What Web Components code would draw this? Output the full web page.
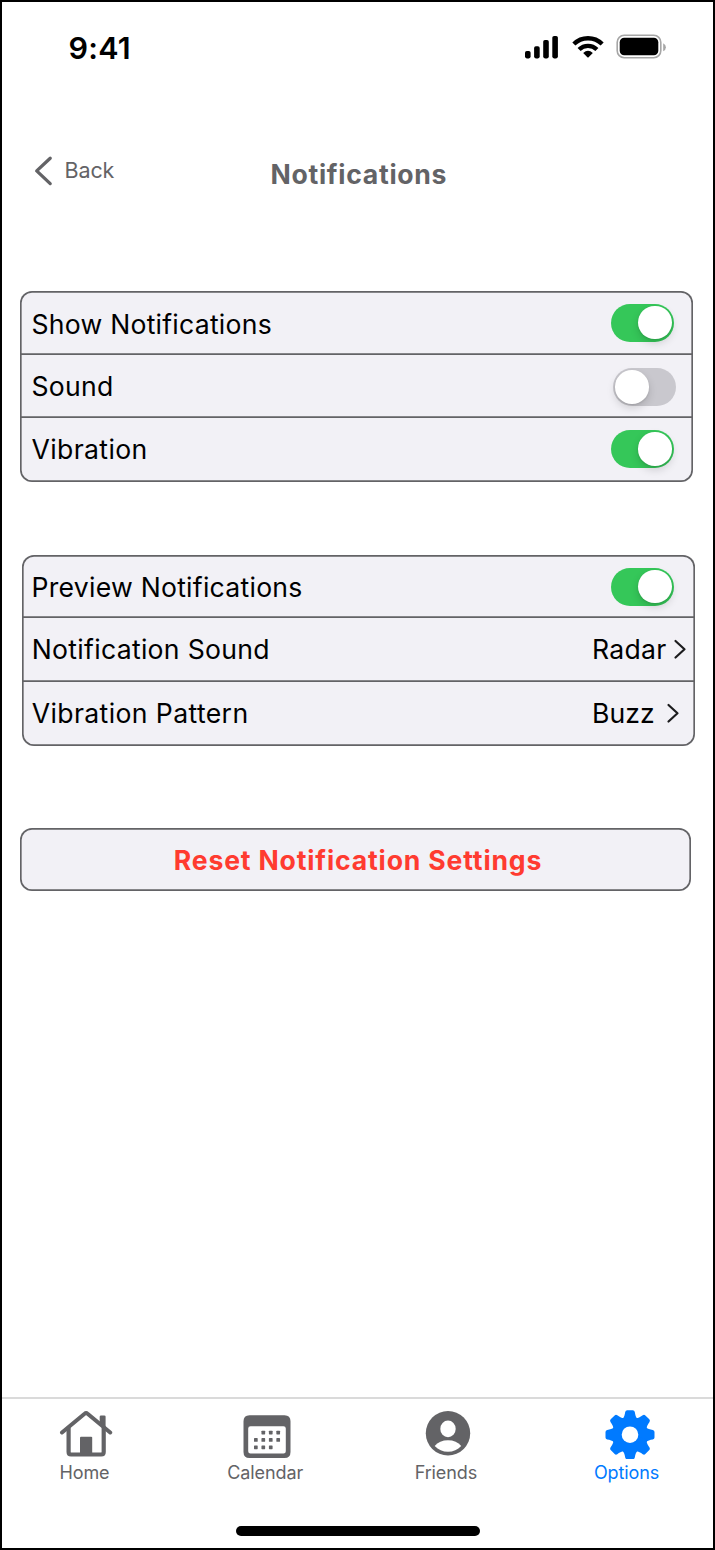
<!DOCTYPE html>
<html lang="en">
<head>
<meta charset="utf-8">
<title>Notifications</title>
<style>
html,body{margin:0;padding:0;background:#fff}
body{font-family:Inter,"Liberation Sans",sans-serif;color:#000}
</style>
</head>
<body>
<app-screen>
  <status-bar slot="status">9:41</status-bar>
  <nav-header slot="header" heading="Notifications">Back</nav-header>
  <settings-card style="margin:0 0 0 18px">
    <settings-row style="--h:64px;--end:19.500px;--ls:.24px;--pad:2px 0;--ty:-2px">Show Notifications<toggle-switch slot="end" on></toggle-switch></settings-row>
    <settings-row style="--h:63px;--end:17.500px;--ls:.24px;--ty:2px">Sound<toggle-switch slot="end"></toggle-switch></settings-row>
    <settings-row style="--h:64px;--end:19.500px;--line:0px;--ls:.36px;--pb:2px">Vibration<toggle-switch slot="end" on></toggle-switch></settings-row>
  </settings-card>
  <settings-card style="margin:73px 0 0 20px">
    <settings-row style="--h:63px;--start:9.500px;--end:21.500px;--ls:.25px;--pad:2px;--ty:-1px">Preview Notifications<toggle-switch slot="end" on></toggle-switch></settings-row>
    <settings-row style="--h:64px;--start:9.700px;--end:8px;--ls:.3px;--pb:2px">Notification Sound<row-value slot="end" style="width:95px">Radar</row-value></settings-row>
    <settings-row style="--h:64px;--start:9.700px;--end:15.500px;--line:0px;--ls:.38px;--pb:2px">Vibration Pattern<row-value slot="end" style="width:87.500px;letter-spacing:.1px">Buzz</row-value></settings-row>
  </settings-card>
  <danger-button style="margin:82px 0 0 18px">Reset Notification Settings</danger-button>
  <tab-bar slot="tabs">
    <tab-item icon="home">Home</tab-item>
    <tab-item icon="calendar">Calendar</tab-item>
    <tab-item icon="friends">Friends</tab-item>
    <tab-item icon="options" active>Options</tab-item>
  </tab-bar>
</app-screen>
<script>
const define = (name, html) => {
  const t = document.createElement('template');
  t.innerHTML = html;
  customElements.define(name, class extends HTMLElement {
    constructor() {
      super();
      this.attachShadow({mode: 'open'}).append(t.content.cloneNode(true));
    }
    connectedCallback() {
      const h = this.shadowRoot.querySelector('[data-heading]');
      if (h) h.textContent = this.getAttribute('heading');
      const i = this.shadowRoot.querySelector('[data-icon]');
      if (i) i.innerHTML = ICONS[this.getAttribute('icon')];
    }
  });
};

const tooth = a => `<path transform="rotate(${a})" d="M-8 -15.5C-5.6 -17.6 -5.3 -20 -4.8 -22.8Q-4.4 -24.5 -2.8 -24.5H2.8Q4.4 -24.5 4.8 -22.8C5.3 -20 5.6 -17.6 8 -15.5L5 -8H-5Z"/>`;
const ICONS = {
  home: `<svg width="54" height="50" viewBox="59 1408.500 54 50" style="margin-left:3px"><path d="M99.700 1425V1416.200Q99.700 1415 101 1415H104.300Q105.600 1415 105.600 1416.200V1428Z" fill="currentColor"/><path d="M62 1432L84.600 1413.300Q86.100 1412 87.600 1413.300L110.200 1432" fill="none" stroke="currentColor" stroke-width="4" stroke-linecap="round"/><path d="M68.600 1427V1451.600Q68.600 1454 71 1454H101.300Q103.700 1454 103.700 1451.600V1427" fill="none" stroke="currentColor" stroke-width="4.200"/><rect x="80" y="1436.200" width="12.200" height="19" rx="1" fill="currentColor"/></svg>`,
  calendar: `<svg width="54" height="50" viewBox="240.500 1409 54 50" style="margin-left:4px"><path fill-rule="evenodd" fill="currentColor" d="M250 1415.200H285Q291 1415.200 291 1421.200V1452Q291 1458 285 1458H250Q244 1458 244 1452V1421.200Q244 1415.200 250 1415.200ZM251 1426.200Q248.700 1426.200 248.700 1428.500V1451.200Q248.700 1453.500 251 1453.500H284Q286.300 1453.500 286.300 1451.200V1428.500Q286.300 1426.200 284 1426.200Z"/><g fill="currentColor">${[[1,0],[2,0],[3,0],[0,1],[1,1],[2,1],[3,1],[0,2],[1,2],[2,2]].map(([c,r])=>`<rect x="${254.5+c*7.45}" y="${1430.7+r*7.4}" width="3.700" height="3.700" rx=".6"/>`).join('')}</g></svg>`,
  friends: `<svg width="54" height="50" viewBox="421.300 1409 54 50" style="margin-left:4.500px"><circle cx="448.300" cy="1433.200" r="22.200" fill="currentColor"/><ellipse cx="448.300" cy="1428.900" rx="7.700" ry="8.300" fill="#fff"/><path d="M435 1446C438 1442.200 442.700 1440.200 448.300 1440.200S458.500 1442.200 461.500 1446C458 1449.800 453.500 1451.800 448.300 1451.800S438.600 1449.800 435 1446Z" fill="#fff"/></svg>`,
  options: `<svg width="54" height="50" viewBox="-27 -25.700 54 50" style="margin-left:6px"><g fill="currentColor"><circle r="17.800"/>${[0,45,90,135,180,225,270,315].map(tooth).join('')}</g><circle r="8.300" fill="#fff"/></svg>`
};

define('app-screen', `<style>
:host{display:flex;flex-direction:column;box-sizing:border-box;width:715px;height:1550px;border:2px solid #000;background:#fff;overflow:hidden}
main{flex:1;display:flex;flex-direction:column;align-items:flex-start}
.pill{width:244px;height:10px;border-radius:5px;background:#000;margin:0 0 12px 234px}
</style><slot name="status"></slot><slot name="header"></slot><main><slot></slot></main><slot name="tabs"></slot><div class="pill"></div>`);

define('status-bar', `<style>
:host{display:flex;justify-content:space-between;height:92px;box-sizing:border-box;padding:25px 45px 0 66.500px}
b{font-size:30.500px;font-weight:600;line-height:42px;letter-spacing:.2px}
svg{margin-top:2px}
</style><b><slot></slot></b>
<svg width="144" height="36" viewBox="524 29 144 36">
<rect x="525" y="51" width="5.600" height="7.400" rx="1.800"/><rect x="534.100" y="46.200" width="5.600" height="12.200" rx="1.800"/><rect x="543.200" y="40" width="5.600" height="18.400" rx="1.800"/><rect x="552.300" y="36" width="5.600" height="22.400" rx="1.800"/>
<g fill="none" stroke="#000" stroke-width="4.300"><path d="M573.850 44.100A20 20 0 0 1 602.150 44.100"/><path d="M579.100 49.600A12.600 12.600 0 0 1 596.900 49.600"/></g>
<path d="M583.200 53Q588 48.700 592.800 53L588.600 57.300Q588 57.900 587.400 57.300Z"/>
<rect x="617.200" y="35.300" width="43.600" height="22.400" rx="7" fill="none" stroke="#a6a6a6" stroke-width="1.600"/><rect x="619.700" y="37.800" width="38.600" height="17.400" rx="4.500"/><path d="M663.200 43.200Q665.900 44.500 665.900 47.300T663.200 51.300Z" fill="#a6a6a6"/>
</svg>`);

define('nav-header', `<style>
:host{display:grid;grid-template-columns:268.500px auto;align-items:start;height:197px;box-sizing:border-box;color:#636366;padding-top:56px}
.back{display:flex;align-items:center;height:42px;padding-left:31px;font-size:21.500px;letter-spacing:-.1px;gap:10.500px}
.back svg{display:block}
.back span{margin-top:-2px}
h1{margin:4px 0 0;font-size:26.600px;line-height:40px;font-weight:700;letter-spacing:.7px}
</style><div class="back"><svg width="21" height="32" viewBox="33 154.500 21 32"><path d="M50.200 157.700L36.700 170.400L50.200 183.100" fill="none" stroke="#636366" stroke-width="3.300" stroke-linecap="round" stroke-linejoin="round"/></svg><span><slot></slot></span></div><h1 data-heading></h1>`);

define('settings-card', `<style>
:host{display:grid;width:673px;box-sizing:border-box;border-radius:12px;background:#f2f1f6;box-shadow:inset 0 0 0 1.660px #636366}
</style><slot></slot>`);

define('settings-row', `<style>
:host{display:flex;height:var(--h);box-sizing:border-box;box-shadow:inset 0 calc(-1 * var(--line,1.660px)) 0 0 #636366;font-size:26.600px;letter-spacing:var(--ls)}
div{flex:1;display:flex;align-items:center;justify-content:space-between;box-sizing:border-box;padding:var(--pad,0);padding-bottom:var(--pb,1px);padding-left:var(--start,11.500px);padding-right:var(--end)}
</style><div><span><slot></slot></span><slot name="end"></slot></div>`);

define('toggle-switch', `<style>
:host{display:flex;align-items:center;box-sizing:border-box;width:62.500px;height:38px;border-radius:19px;background:#c9c8ce;padding:0 2px;margin-top:var(--ty,0)}
:host([on]){background:#35c759;justify-content:flex-end}
i{width:33.500px;height:33.500px;border-radius:50%;background:#fff;box-shadow:0 4px 8px rgba(0,0,0,.15),0 1px 2px rgba(0,0,0,.1)}
</style><i></i>`);

define('row-value', `<style>
:host{display:flex;align-items:center;justify-content:space-between}
svg{display:block}
</style><span><slot></slot></span><svg width="14" height="22" viewBox="0 0 14 22"><path d="M2.500 3L11.500 11.300L2.500 19.500" fill="none" stroke="#1c1c1e" stroke-width="2.200" stroke-linecap="round" stroke-linejoin="round"/></svg>`);

define('danger-button', `<style>
:host{display:flex;align-items:center;justify-content:center;width:671px;height:63px;padding-top:1px;padding-left:5px;box-sizing:border-box;border-radius:12px;background:#f2f1f6;box-shadow:inset 0 0 0 1.660px #636366;color:#ff3b30;font-size:26.600px;font-weight:700;letter-spacing:.83px}
</style><slot></slot>`);

define('tab-bar', `<style>
:host{display:grid;grid-template-columns:repeat(4,180.700px);height:129px;box-sizing:border-box;border-top:2px solid #dadada;padding-top:10px}
</style><slot></slot>`);

define('tab-item', `<style>
:host{display:flex;flex-direction:column;align-items:center;color:#636366;font-size:18px;letter-spacing:-.1px;width:165px}
:host([active]){color:#007aff}
div{height:50px}
svg{display:block}
span{line-height:28px}
</style><div data-icon></div><span><slot></slot></span>`);
</script>
</body>
</html>
